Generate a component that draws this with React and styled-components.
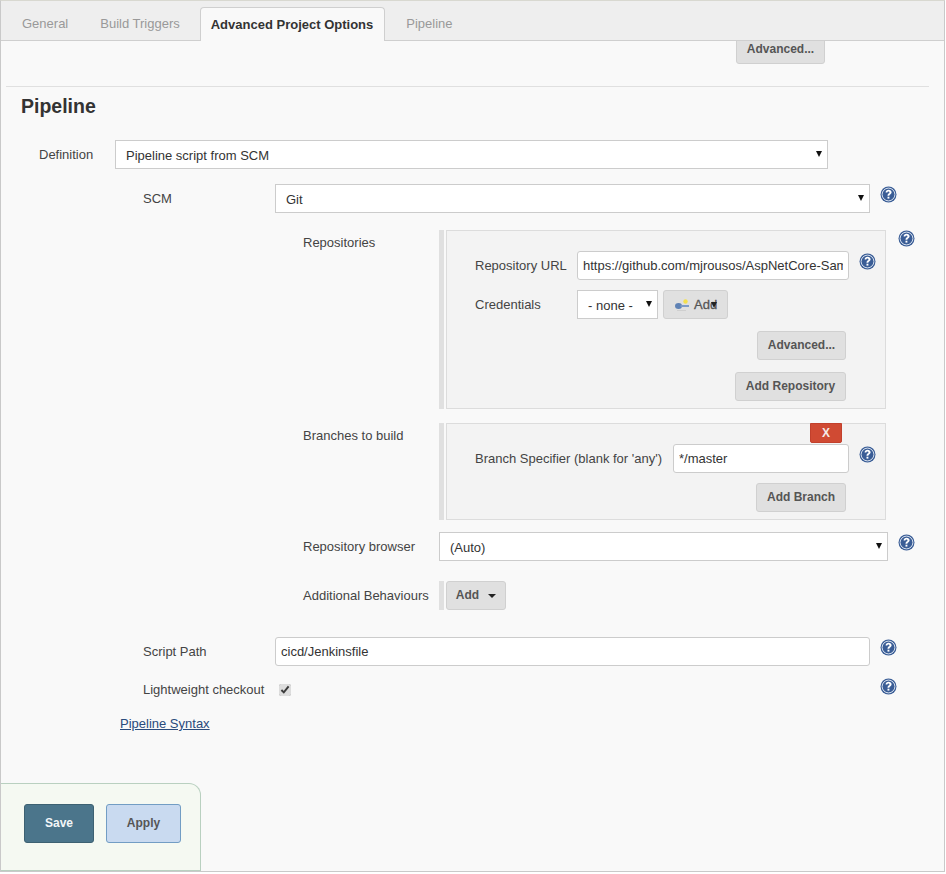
import React from "react";
import styled, { createGlobalStyle } from "styled-components";

const GlobalStyle = createGlobalStyle`
    html, body {
        margin: 0;
        padding: 0;
        background: #fff;
    }
    * {
        box-sizing: border-box;
    }
`

const Page = styled.div`
    width: 945px;
    height: 872px;
    position: relative;
    background: #f9f9f9;
    border: 1px solid #c9c9c9;
    border-top-color: #d8d8d0;
    overflow: hidden;
    font-family: "Liberation Sans", Arial, sans-serif;
    font-size: 13px;
    color: #333;
`

const TabBar = styled.div`
    height: 40px;
    display: flex;
    align-items: flex-end;
    padding-left: 10px;
    background: #eeeeee;
    border-bottom: 1px solid #cfcfcf;
`

const Tab = styled.div`
    height: ${props => props.$active ? '34px' : '33px'};
    padding: ${props => props.$active ? '0 11px 0 10px' : '0 11px'};
    margin-left: ${props => props.$active ? '-1px' : '0'};
    margin-right: 10px;
    margin-bottom: ${props => props.$active ? '-1px' : '0'};
    display: flex;
    align-items: center;
    color: ${props => props.$active ? '#333' : '#999'};
    font-weight: ${props => props.$active ? 700 : 400};
    background: ${props => props.$active ? '#f9f9f9' : 'transparent'};
    border: ${props => props.$active ? '1px solid #cfcfcf' : 'none'};
    border-bottom: none;
    border-radius: 4px 4px 0 0;
`

const TopClip = styled.div`
    height: 23px;
    display: flex;
    justify-content: flex-end;
    align-items: flex-end;
    overflow: hidden;
    padding-right: 119px;
`

const Divider = styled.div`
    height: 1px;
    margin: 22px 15px 0 5px;
    background: #e0e0e0;
`

const Title = styled.h1`
    margin: 7px 0 0 20px;
    height: 24px;
    font-size: 19.5px;
    line-height: 24px;
    font-weight: 700;
    color: #333;
`

const Form = styled.div`
    padding: 22px 0 0 38px;
`

const Row = styled.div`
    display: flex;
    align-items: flex-start;
    margin-top: ${props => props.$top || 0}px;
`

const Label = styled.div`
    width: ${props => props.$width}px;
    flex: none;
    padding-top: ${props => props.$top || 7}px;
    line-height: 16px;
    color: #444;
`

const SelectWrap = styled.div`
    position: relative;
    flex: none;
    width: ${props => props.$width}px;
    height: 29px;
    &::after {
        content: '';
        position: absolute;
        right: 6px;
        top: 11px;
        border-left: 3.5px solid transparent;
        border-right: 3.5px solid transparent;
        border-top: 6px solid #111;
        pointer-events: none;
    }
`

const Select = styled.select`
    appearance: none;
    width: 100%;
    height: 100%;
    padding: 2px 10px 0;
    background: #fff;
    border: 1px solid #ccc;
    border-radius: 0;
    font: 13px "Liberation Sans", Arial, sans-serif;
    color: #333;
`

const Input = styled.input`
    flex: none;
    width: ${props => props.$width}px;
    height: 29px;
    padding: 0 ${props => props.$pad || 5}px;
    background: #fff;
    border: 1px solid #ccc;
    border-radius: 3px;
    font: 13px "Liberation Sans", Arial, sans-serif;
    color: #333;
`

const Button = styled.button`
    height: 29px;
    flex: none;
    width: ${props => props.$width}px;
    padding: 0 0 2px;
    display: inline-flex;
    align-items: center;
    justify-content: center;
    background: #e0e0e0;
    border: 1px solid #d0d0d0;
    border-radius: 3px;
    font: 700 12px/1 "Liberation Sans", Arial, sans-serif;
    color: #555;
`

const HelpSlot = styled.div`
    flex: none;
    margin-left: ${props => props.$left}px;
    margin-top: ${props => props.$top || 0}px;
    width: 17px;
    height: 17px;
`

const SubSection = styled.div`
    padding: 15px 0 0 104px;
`

const NestedSection = styled.div`
    padding: 17px 0 0 160px;
`

const Bar = styled.div`
    flex: none;
    width: 5px;
    align-self: stretch;
    background: #e0e0e0;
    margin-right: 2px;
`

const Panel = styled.div`
    position: relative;
    flex: none;
    width: 440px;
    height: ${props => props.$height}px;
    background: #f3f3f3;
    border: 1px solid #dcdcdc;
    padding: ${props => props.$pad}px 0 0 28px;
`

const PanelRow = styled.div`
    display: flex;
    align-items: flex-start;
    margin-bottom: ${props => props.$gap || 0}px;
`

const PanelActions = styled.div`
    display: flex;
    justify-content: flex-end;
    padding-right: 39px;
    margin-bottom: ${props => props.$gap || 0}px;
`

const PanelLabel = styled.div`
    flex: none;
    width: ${props => props.$width}px;
    padding-top: 7px;
    line-height: 16px;
    color: #444;
`

const KeyButton = styled(Button)`
    position: relative;
    width: 65px;
    margin-left: 5px;
    justify-content: flex-start;
    padding: 0 0 0 11px;
    gap: 4px;
    font-size: 13px;
    font-weight: 400;
    -webkit-text-stroke: 0.3px #555;
`

const AddCaret = styled.span`
    position: absolute;
    right: 10px;
    top: 11px;
    border-left: 3px solid transparent;
    border-right: 3px solid transparent;
    border-top: 6px solid #222;
`

const DeleteButton = styled.button`
    position: absolute;
    top: -1px;
    right: 43px;
    width: 32px;
    height: 20px;
    padding: 0;
    background: #d04a33;
    border: 1px solid #c2402c;
    border-radius: 0 0 2px 2px;
    font: 700 12px/1 "Liberation Sans", Arial, sans-serif;
    color: #f5e9e6;
`

const MenuCaret = styled.span`
    margin-left: 9px;
    margin-top: 2px;
    border-left: 4px solid transparent;
    border-right: 4px solid transparent;
    border-top: 4px solid #222;
`

const Check = styled.input`
    margin: 4px 0 0 0;
    width: 12px;
    height: 12px;
    flex: none;
    accent-color: #dddddd;
`

const Syntax = styled.a`
    display: block;
    margin: 18px 0 0 81px;
    line-height: 16px;
    color: #2a4b7c;
    text-decoration: underline;
`

const SaveBar = styled.div`
    position: absolute;
    left: -1px;
    bottom: 0;
    width: 201px;
    height: 88px;
    display: flex;
    align-items: flex-start;
    gap: 12px;
    padding: 20px 0 0 23px;
    background: #f5f9f2;
    border: 1px solid #b9d0c0;
    border-left: 1px solid #c9c9c9;
    border-radius: 0 12px 0 0;
`

const MainButton = styled.button`
    flex: none;
    height: 39px;
    width: ${props => props.$width}px;
    padding: 0 0 2px;
    border-radius: 3px;
    border: 1px solid ${props => props.$primary ? '#3d6172' : '#729dc4'};
    background: ${props => props.$primary ? '#4b758b' : '#c9daf0'};
    color: ${props => props.$primary ? '#f2f6f8' : '#555'};
    font: 700 12px/1 "Liberation Sans", Arial, sans-serif;
`

const HelpIcon = () => (
    <svg width="17" height="17" viewBox="0 0 17 17">
        <circle cx="8.5" cy="8.5" r="8" fill="#3a5d96" />
        <circle cx="8.5" cy="8.5" r="6.4" fill="none" stroke="#e8eef6" strokeWidth="0.9" />
        <path d="M5.6 6.5c0-1.7 1.3-2.7 3-2.7s3 1 3 2.5c0 1.1-.7 1.7-1.4 2.2-.6.4-.8.7-.8 1.3H7.5c0-1.1.3-1.6 1-2.2.5-.4 1-.7 1-1.2 0-.5-.4-.8-1-.8-.6 0-1.1.4-1.1 1z" fill="#fff" />
        <rect x="7.5" y="10.7" width="1.9" height="1.9" fill="#fff" />
    </svg>
)

const KeyIcon = () => (
    <svg width="15" height="14" viewBox="0 0 15 14">
        <ellipse cx="3.5" cy="8" rx="3.5" ry="3" fill="#5f82b5" />
        <rect x="5.5" y="7" width="8.5" height="2" fill="#7d9bc7" />
        <circle cx="10.5" cy="3.5" r="2.2" fill="#f4e04d" />
        <rect x="2" y="12" width="9" height="1" fill="#cfcfcf" />
    </svg>
)

const App = () => {
    return(
        <Page>
            <GlobalStyle />
            <TabBar>
                <Tab>General</Tab>
                <Tab>Build Triggers</Tab>
                <Tab $active>Advanced Project Options</Tab>
                <Tab>Pipeline</Tab>
            </TabBar>
            <TopClip>
                <Button $width={89}>Advanced...</Button>
            </TopClip>
            <Divider />
            <Title>Pipeline</Title>
            <Form>
                <Row>
                    <Label $width={76}>Definition</Label>
                    <SelectWrap $width={713}>
                        <Select defaultValue="scm">
                            <option value="scm">Pipeline script from SCM</option>
                        </Select>
                    </SelectWrap>
                </Row>
                <SubSection>
                    <Row>
                        <Label $width={132}>SCM</Label>
                        <SelectWrap $width={595}>
                            <Select defaultValue="git">
                                <option value="git">Git</option>
                            </Select>
                        </SelectWrap>
                        <HelpSlot $left={10} $top={2}><HelpIcon /></HelpSlot>
                    </Row>
                    <NestedSection>
                        <Row>
                            <Label $width={136} $top={5}>Repositories</Label>
                            <Bar />
                            <Panel $height={179} $pad={20}>
                                <PanelRow $gap={10}>
                                    <PanelLabel $width={102}>Repository URL</PanelLabel>
                                    <Input $width={272} defaultValue="https://github.com/mjrousos/AspNetCore-Sample" />
                                    <HelpSlot $left={10} $top={2}><HelpIcon /></HelpSlot>
                                </PanelRow>
                                <PanelRow $gap={12}>
                                    <PanelLabel $width={102}>Credentials</PanelLabel>
                                    <SelectWrap $width={81}>
                                        <Select defaultValue="none">
                                            <option value="none">- none -</option>
                                        </Select>
                                    </SelectWrap>
                                    <KeyButton><KeyIcon />Add<AddCaret /></KeyButton>
                                </PanelRow>
                                <PanelActions $gap={12}>
                                    <Button $width={89}>Advanced...</Button>
                                </PanelActions>
                                <PanelActions>
                                    <Button $width={111}>Add Repository</Button>
                                </PanelActions>
                            </Panel>
                            <HelpSlot $left={12}><HelpIcon /></HelpSlot>
                        </Row>
                        <Row $top={14}>
                            <Label $width={136} $top={5}>Branches to build</Label>
                            <Bar />
                            <Panel $height={97} $pad={20}>
                                <DeleteButton>X</DeleteButton>
                                <PanelRow $gap={10}>
                                    <PanelLabel $width={198}>Branch Specifier (blank for 'any')</PanelLabel>
                                    <Input $width={176} defaultValue="*/master" />
                                    <HelpSlot $left={10} $top={2}><HelpIcon /></HelpSlot>
                                </PanelRow>
                                <PanelActions>
                                    <Button $width={90}>Add Branch</Button>
                                </PanelActions>
                            </Panel>
                        </Row>
                        <Row $top={12}>
                            <Label $width={136}>Repository browser</Label>
                            <SelectWrap $width={449}>
                                <Select defaultValue="auto">
                                    <option value="auto">(Auto)</option>
                                </Select>
                            </SelectWrap>
                            <HelpSlot $left={10} $top={2}><HelpIcon /></HelpSlot>
                        </Row>
                        <Row $top={20}>
                            <Label $width={136}>Additional Behaviours</Label>
                            <Bar />
                            <Button $width={60}>Add<MenuCaret /></Button>
                        </Row>
                    </NestedSection>
                    <Row $top={27}>
                        <Label $width={132}>Script Path</Label>
                        <Input $width={595} defaultValue="cicd/Jenkinsfile" />
                        <HelpSlot $left={10} $top={2}><HelpIcon /></HelpSlot>
                    </Row>
                    <Row $top={14}>
                        <Label $width={136} $top={2}>Lightweight checkout</Label>
                        <Check type="checkbox" defaultChecked />
                        <HelpSlot $left={589} $top={-2}><HelpIcon /></HelpSlot>
                    </Row>
                </SubSection>
                <Syntax href="#">Pipeline Syntax</Syntax>
            </Form>
            <SaveBar>
                <MainButton $primary $width={70}>Save</MainButton>
                <MainButton $width={75}>Apply</MainButton>
            </SaveBar>
        </Page>
    )
}

export default App
